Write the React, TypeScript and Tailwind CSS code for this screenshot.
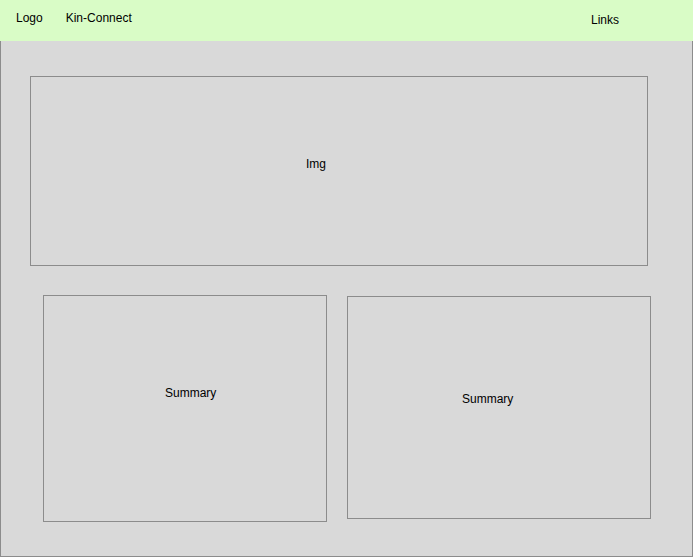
import React from "react";

export default function App() {
  return (
    <div className="w-[693px] h-[557px] font-['Liberation_Sans',Arial,sans-serif] text-[12px] leading-[14px] text-black">
      <header className="h-[41px] bg-[#d9fcc6] flex items-start">
        <span className="ml-[16px] mt-[11px]">Logo</span>
        <span className="ml-[23px] mt-[11px]">Kin-Connect</span>
        <span className="ml-auto mr-[74px] mt-[13px]">Links</span>
      </header>
      <main className="h-[516px] bg-[#d9d9d9] border-x border-b border-[#8c8c8c] flex flex-col">
        <div className="ml-[29px] mt-[35px] w-[618px] h-[190px] border border-[#8c8c8c] pl-[275px] pt-[80px]">
          Img
        </div>
        <div className="flex items-start mt-[29px]">
          <div className="ml-[42px] w-[284px] h-[227px] border border-[#8c8c8c] pl-[121px] pt-[90px]">
            Summary
          </div>
          <div className="ml-[20px] mt-[1px] w-[304px] h-[223px] border border-[#8c8c8c] pl-[114px] pt-[95px]">
            Summary
          </div>
        </div>
      </main>
    </div>
  );
}
